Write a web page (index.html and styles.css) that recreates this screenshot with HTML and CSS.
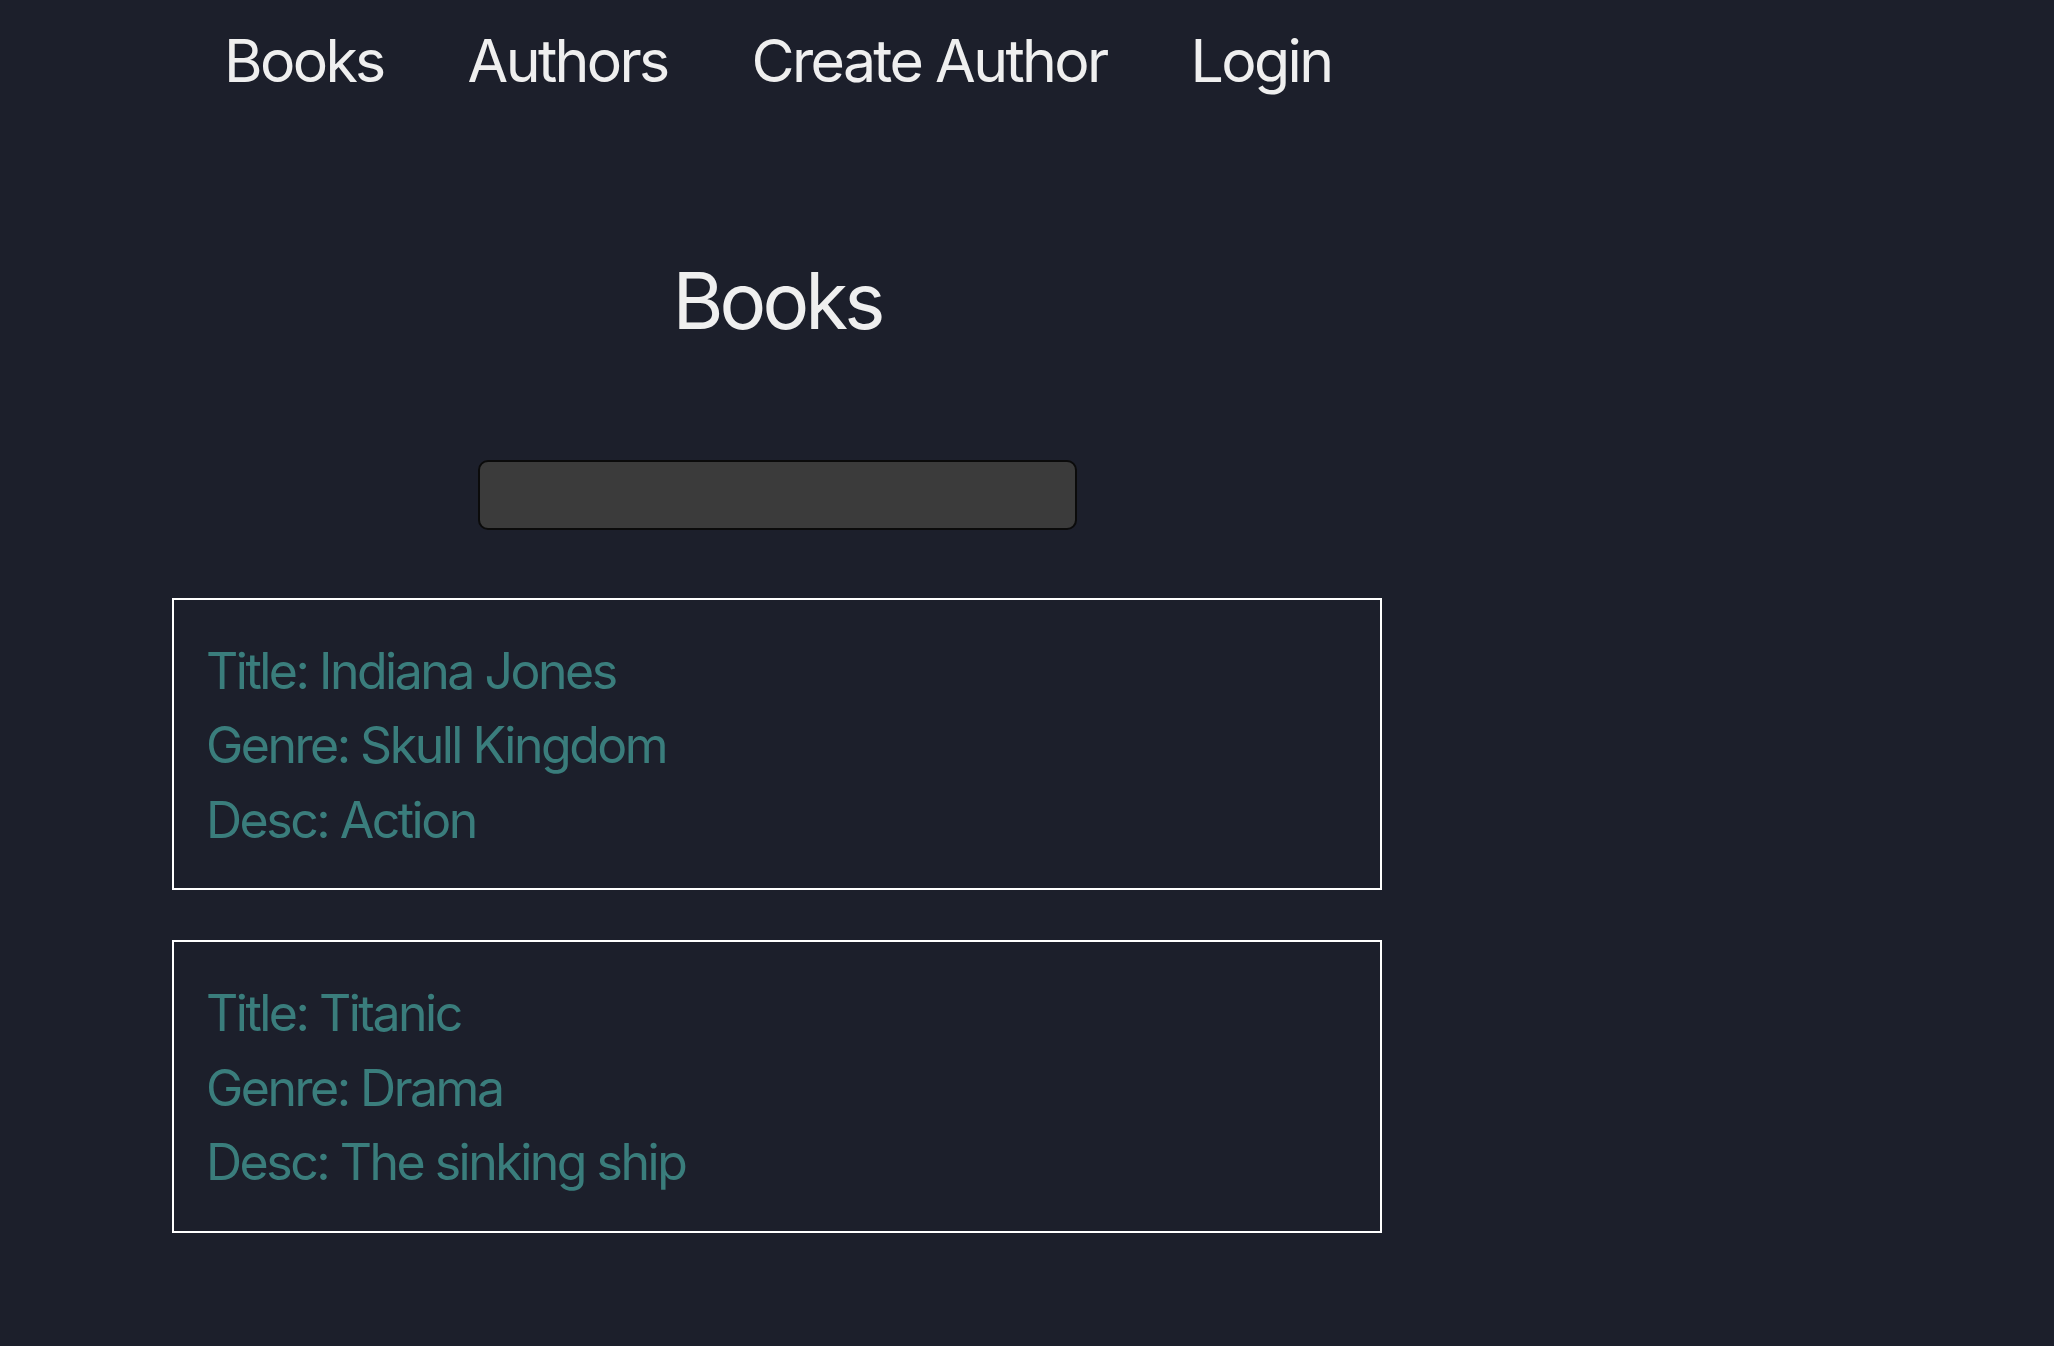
FILE: index.html
```html
<!DOCTYPE html>
<html lang="en">
<head>
<meta charset="utf-8">
<title>Books</title>
<link rel="stylesheet" href="styles.css">
</head>
<body>
<nav class="nav">
  <a class="nav-link" href="#">Books</a>
  <a class="nav-link" href="#">Authors</a>
  <a class="nav-link" href="#">Create Author</a>
  <a class="nav-link" href="#">Login</a>
</nav>
<main class="content">
  <h1 class="page-title">Books</h1>
  <input class="search" type="text">
  <div class="book-list">
    <div class="book-card">
      <p class="book-line">Title: Indiana Jones</p>
      <p class="book-line">Genre: Skull Kingdom</p>
      <p class="book-line">Desc: Action</p>
    </div>
    <div class="book-card">
      <p class="book-line">Title: Titanic</p>
      <p class="book-line">Genre: Drama</p>
      <p class="book-line">Desc: The sinking ship</p>
    </div>
  </div>
</main>
</body>
</html>
```
FILE: styles.css
```css
html, body {
  margin: 0;
  padding: 0;
  background: #1c1f2b;
  min-height: 100%;
}
body {
  font-family: Inter, "Noto Sans", sans-serif;
  color: #efefef;
}
.nav {
  display: flex;
  gap: 84px;
  padding: 25px 0 0 224px;
}
.nav-link {
  color: #efefef;
  text-decoration: none;
  font-size: 59px;
  line-height: 1.21;
  letter-spacing: -0.045em;
}
.content {
  width: 1210px;
  margin-left: 172px;
  display: flex;
  flex-direction: column;
  align-items: center;
}
.page-title {
  font-size: 78px;
  font-weight: 400;
  line-height: 1.21;
  letter-spacing: -0.05em;
  margin: 158px 0 0;
}
.search {
  box-sizing: border-box;
  width: 599px;
  height: 70px;
  margin-top: 111px;
  background: #3b3b3b;
  border: 2px solid #0b0b0b;
  border-radius: 10px;
  outline: none;
}
.book-list {
  align-self: stretch;
  margin-top: 68px;
  display: flex;
  flex-direction: column;
  gap: 50px;
}
.book-card {
  border: 2px solid #ffffff;
  padding: 34px 32px 31px;
}
.book-line {
  margin: 0;
  font-size: 50px;
  line-height: 74.5px;
  letter-spacing: -0.05em;
  color: #3a7d7c;
}
```
